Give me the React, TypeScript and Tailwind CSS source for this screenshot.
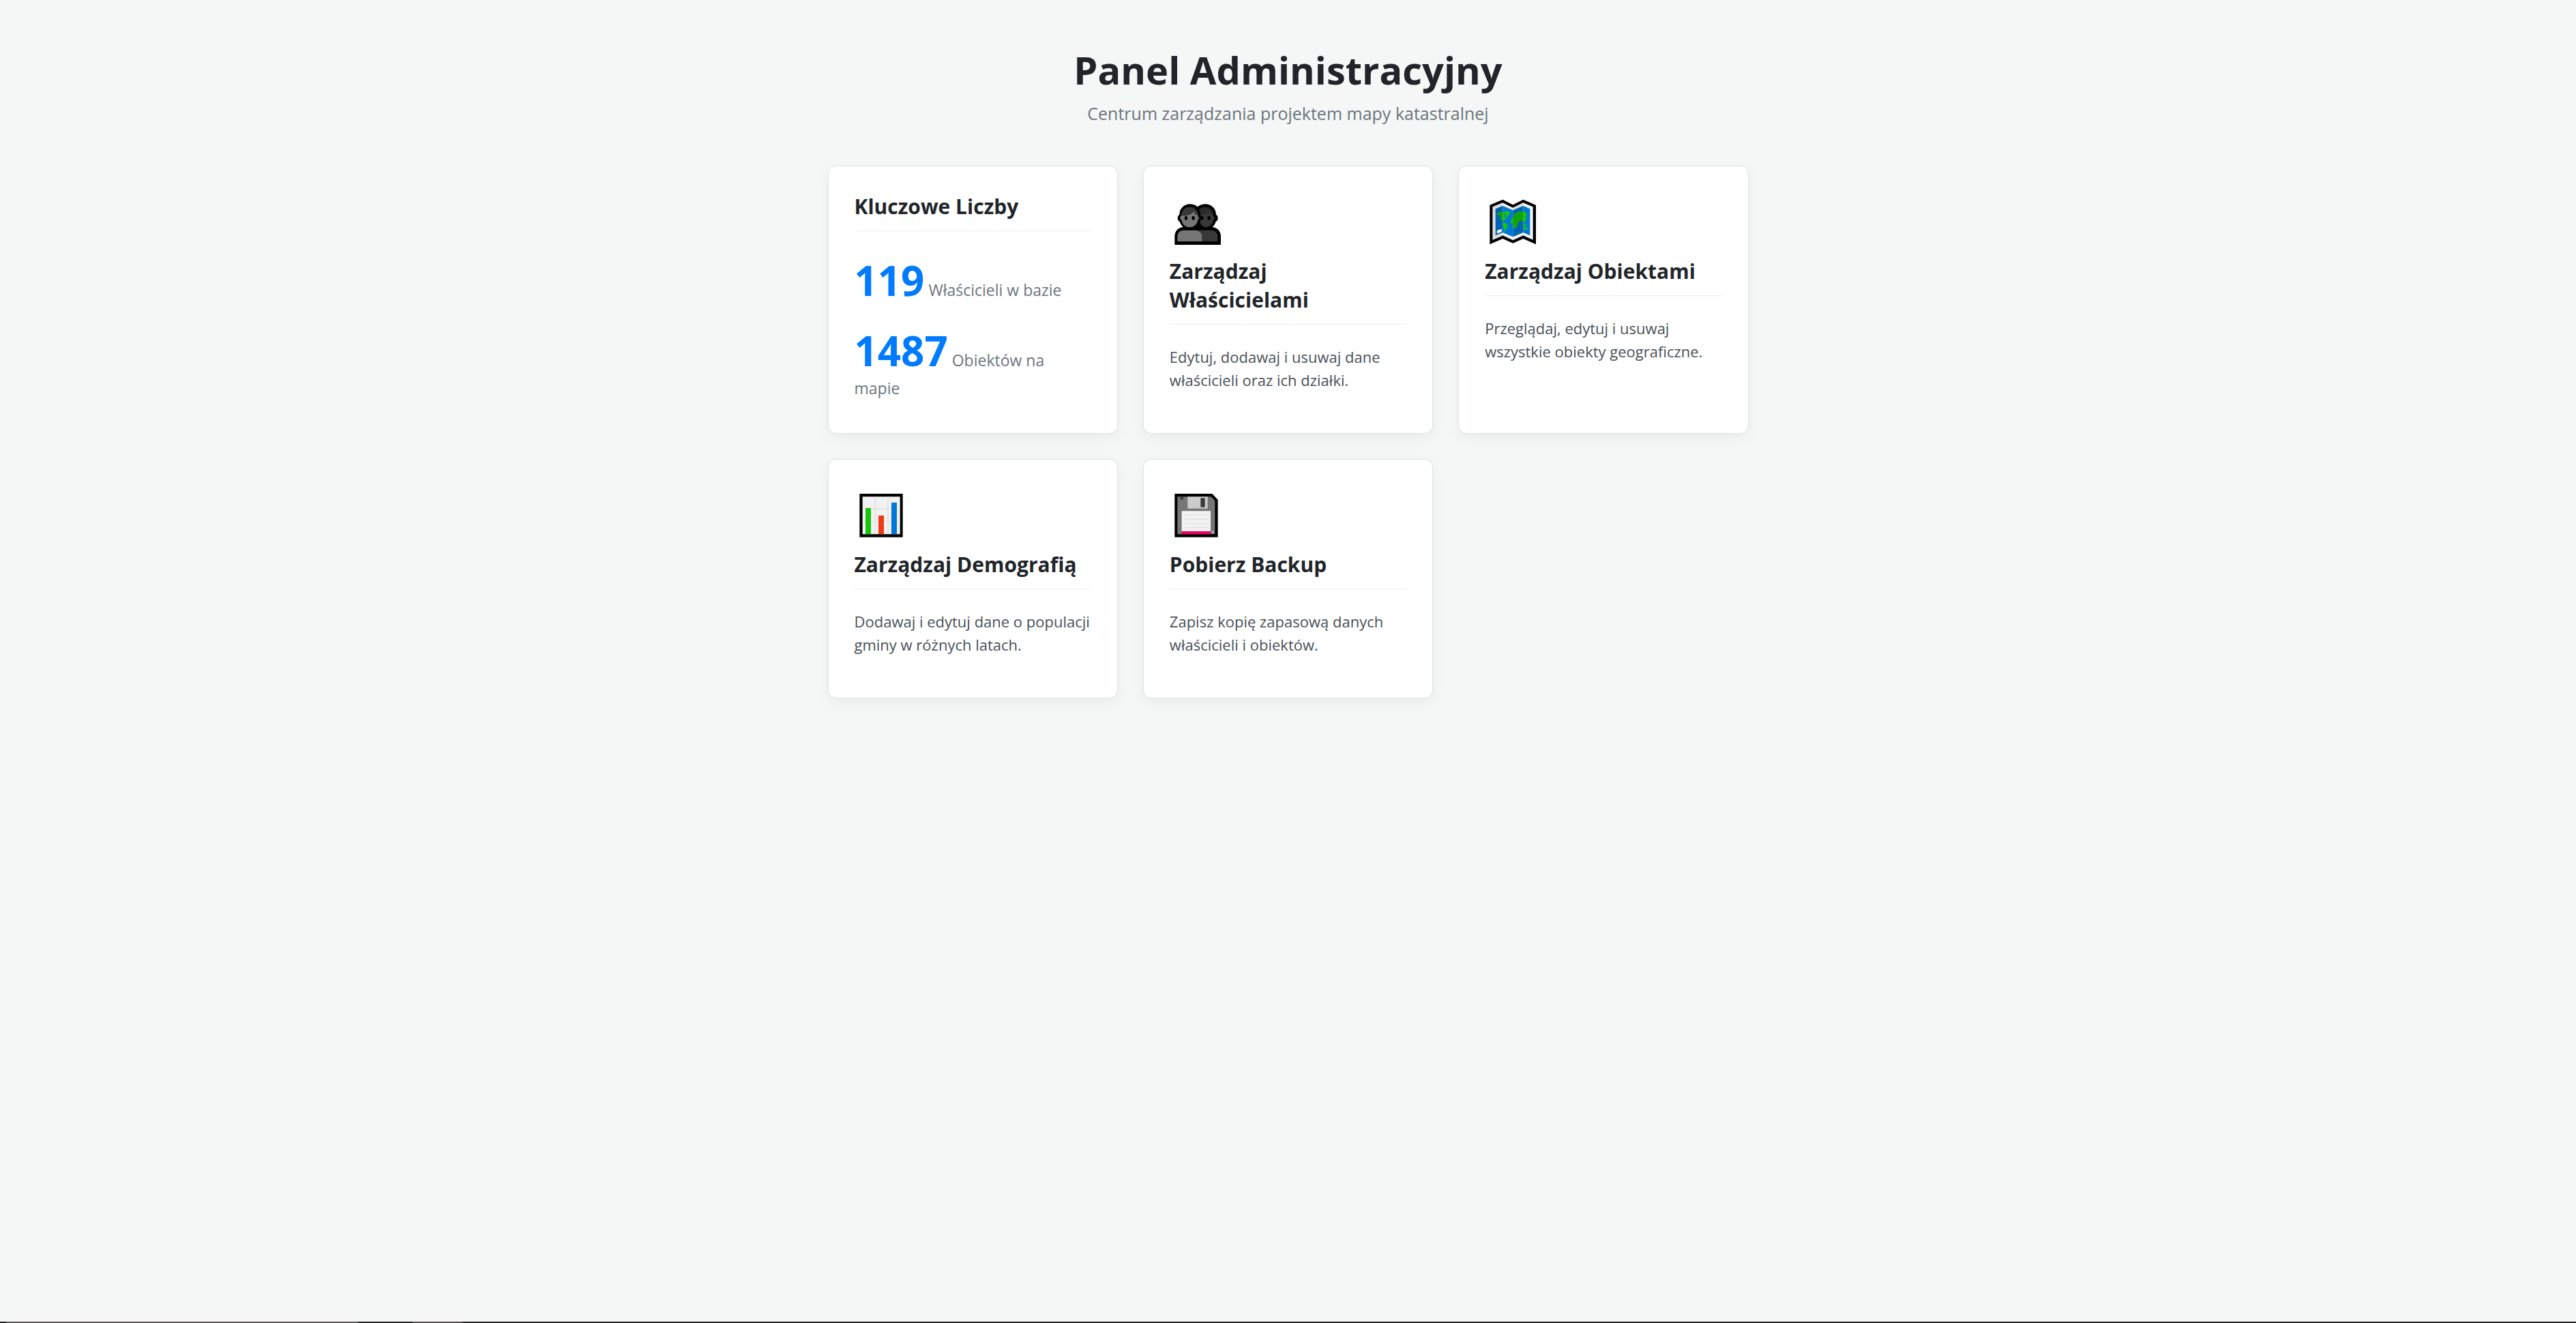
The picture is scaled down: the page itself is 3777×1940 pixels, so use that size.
import type { ReactNode } from "react";

function PeopleIcon() {
  return (
    <svg viewBox="44 36 240 240" className="size-20" aria-hidden="true">
      <path
        d="M133 88c13 0 25 4 34 12 9-8 21-12 34-12 26 0 47 20 47 46 6 3 8 9 8 15 0 7-3 13-9 16-3 10-8 18-15 24 22 2 37 18 37 41v37H66v-37c0-23 15-39 37-41-7-6-12-14-15-24-6-3-9-9-9-16 0-6 2-12 8-15 0-26 20-46 46-46z"
        fill="#000"
      />
      <path d="M201 101c-12 0-21 4-28 11 6 9 8 19 8 31l-3 28c6 11 14 18 25 18 18 0 31-14 33-33l8-7-8-8c0-22-14-40-35-40z" fill="#383838" />
      <path d="M201 101c-12 0-21 4-28 11 4 6 7 14 8 23 18 0 31-4 38-16 3 9 8 14 17 16-2-20-15-34-35-34z" fill="#2b2b2b" />
      <path d="M133 101c-21 0-37 16-37 38l-6 4v10l6 3c2 20 17 34 36 34s34-14 36-34l6-5-5-8c0-25-14-42-36-42z" fill="#767676" />
      <path d="M133 101c-21 0-37 15-38 38 24 1 44-3 54-19 4 10 10 15 19 17-2-22-16-36-35-36z" fill="#383838" />
      <ellipse cx="116" cy="149" rx="6.500" ry="9" />
      <ellipse cx="148" cy="149" rx="6.500" ry="9" />
      <ellipse cx="186" cy="149" rx="6.500" ry="9" />
      <ellipse cx="217" cy="149" rx="6.500" ry="9" />
      <path d="M152 203h75c17 0 28 12 28 28v21h-75z" fill="#383838" />
      <path d="M78 252v-21c0-17 11-28 28-28h48c20 0 32 12 32 29v20z" fill="#767676" />
    </svg>
  );
}

function MapIcon() {
  return (
    <svg viewBox="51 36 240 240" className="size-20" aria-hidden="true">
      <path d="M73 92l57-24 45 23 45-23 56 24v173l-56-25-45 20-45-20-57 25z" fill="#000" />
      <path d="M86 100l44-18 45 22 45-22 43 18v145l-43-19-45 21-45-21-44 19z" fill="#f2f2f2" />
      <path d="M86 100l44-18v13l-32 14v117l32-13v13l-44 19zM175 104l45-22v13l-45 20z" fill="#e1dede" />
      <path d="M98 109l32-14v118l-32 13z" fill="#0063b1" />
      <path d="M130 95l45 20v117l-45-19z" fill="#0078d7" />
      <path d="M175 115l45-20v118l-45 19z" fill="#0063b1" />
      <path d="M220 95l30 14v117l-30-13z" fill="#0078d7" />
      <path d="M103 131l5-5 22-6v43l-5-3-6-11 1-10-10-4-6 2z" fill="#13a10e" />
      <path d="M130 124l11-4 19 0 0 13-7 8-8 8-2-10 4-8-8 1-3 10 8 6-4 9-5 6-2-2-3 8 0-15z" fill="#16c60c" />
      <path d="M132 171l10-1 11 9-3 13-6 5-3 12-5-5-1-16-5-8z" fill="#16c60c" />
      <path d="M175 144l6-13 14-9 25-5v50l-6-2-6-6-5 8-6 1-1 14-9 13-6-1-1-18-5 2z" fill="#13a10e" />
      <path d="M175 144v32l-7-2-4-9 6-8-3-4zM179 176l5 2-4 16-5-4z" fill="#16c60c" />
      <path d="M220 121l15 4v18l-4-3-1 8 8 2-6 8-5 8-7 0zM217 177l8-4 6 6 7-1v5h-18zM220 192l9-3 9 2v11l-7-3-11 2z" fill="#16c60c" />
      <path d="M105 204l20-7v13l-20 7z" fill="#fff" />
    </svg>
  );
}

function ChartIcon() {
  return (
    <svg viewBox="36 36 240 240" className="size-20" aria-hidden="true">
      <path d="M58 72h190v191H58z" fill="#000" />
      <path d="M71 85h165v165H71z" fill="#f2f2f2" />
      <path d="M123 85h6v165h-6zM180 85h6v165h-6zM71 135h165v6H71zM71 192h165v6H71z" fill="#e4e4e4" />
      <path d="M84 135h24v115H84z" fill="#16c60c" />
      <path d="M141 168h24v82h-24z" fill="#f03a17" />
      <path d="M198 111h24v139h-24z" fill="#0078d7" />
    </svg>
  );
}

function FloppyIcon() {
  return (
    <svg viewBox="44 36 240 240" className="size-20" aria-hidden="true">
      <path d="M66 72h165l25 26v165H66z" fill="#000" />
      <path d="M78 85h148l17 18v147H78" fill="#767676" />
      <path d="M91 85h13v13H91z" fill="#383838" />
      <path d="M123 85h89v52h-89z" fill="#ccc" />
      <path d="M208 85h4v52h-4zM123 134h89v3h-89z" fill="#b4b4b4" />
      <path d="M180 91h19v40h-19z" fill="#383838" />
      <path d="M97 148h127v89H97z" fill="#f2f2f2" />
      <path d="M110 162h102v5H110zM110 181h102v5H110zM110 200h102v5H110zM110 219h102v5H110z" fill="#e3e3e3" />
      <path d="M97 237h127v13H97z" fill="#ec0060" />
      <path d="M230 237h7v7h-7z" fill="#ddd" />
    </svg>
  );
}

const cardClass =
  "block rounded-xl border border-[#dee2e6] bg-white px-[38px] pt-[38px] pb-[37px] shadow-[0_6px_18px_rgba(0,0,0,0.05)]";

function CardTitle({ children }: { children: ReactNode }) {
  return (
    <h2 className="border-b border-[#eeeeee] pb-[14px] text-[30px] leading-[42px] font-bold">
      {children}
    </h2>
  );
}

function LinkCard({ icon, title, text }: { icon: ReactNode; title: string; text: string }) {
  return (
    <a href="#" className={cardClass}>
      <div className="h-[95px]">{icon}</div>
      <CardTitle>{title}</CardTitle>
      <p className="mt-[30px] mb-6 text-[22px] leading-[34px] text-[#495057]">{text}</p>
    </a>
  );
}

function Stat({ value, label }: { value: string; label: string }) {
  return (
    <p className="text-[23px] leading-[38px] text-[#6c757d]">
      <span className="text-[60px] leading-[72px] font-bold text-[#007bff]">{value}</span> {label}
    </p>
  );
}

export default function App() {
  return (
    <div className="flex min-h-screen flex-col bg-[#f4f7f6] font-['Open_Sans','Noto_Sans',sans-serif] text-[#212529]">
      <main className="mx-auto w-full max-w-[1350px] grow pt-[60px]">
        <header className="mb-[58px] text-center">
          <h1 className="text-[56px] leading-[84px] font-bold">Panel Administracyjny</h1>
          <p className="mt-[3px] text-[25px] leading-[38px] text-[#6c757d]">
            Centrum zarządzania projektem mapy katastralnej
          </p>
        </header>
        <div className="grid grid-cols-3 gap-[37px]">
          <section className={cardClass}>
            <CardTitle>Kluczowe Liczby</CardTitle>
            <div className="mt-9 flex flex-col gap-[31px]">
              <Stat value="119" label="Właścicieli w bazie" />
              <Stat value="1487" label="Obiektów na mapie" />
            </div>
          </section>
          <LinkCard
            icon={<PeopleIcon />}
            title="Zarządzaj Właścicielami"
            text="Edytuj, dodawaj i usuwaj dane właścicieli oraz ich działki."
          />
          <LinkCard
            icon={<MapIcon />}
            title="Zarządzaj Obiektami"
            text="Przeglądaj, edytuj i usuwaj wszystkie obiekty geograficzne."
          />
          <LinkCard
            icon={<ChartIcon />}
            title="Zarządzaj Demografią"
            text="Dodawaj i edytuj dane o populacji gminy w różnych latach."
          />
          <LinkCard
            icon={<FloppyIcon />}
            title="Pobierz Backup"
            text="Zapisz kopię zapasową danych właścicieli i obiektów."
          />
        </div>
      </main>
      <div className="flex h-0.5 bg-[#212121]" aria-hidden="true">
        <div className="ml-[9px] w-[516px] bg-[#585656]" />
        <div className="ml-20 w-[73px] bg-[#4f4d4d]" />
      </div>
    </div>
  );
}
